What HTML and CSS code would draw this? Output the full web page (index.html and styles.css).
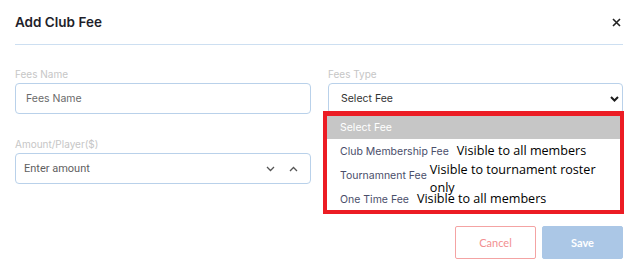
FILE: index.html
```html
<!DOCTYPE html>
<html lang="en">
<head>
  <meta charset="UTF-8" />
  <meta name="viewport" content="width=device-width, initial-scale=1.0" />
  <title>Add Club Fee</title>
  <link rel="stylesheet" href="styles.css">
</head>
<body>
  <div class="modal">
    <div class="modal-header">
      <h1>Add Club Fee</h1>
      <button class="close" aria-label="Close">
        <svg width="9" height="9" viewBox="0 0 9 9"><path d="M1 1L8 8M8 1L1 8" stroke="#222" stroke-width="1.6" fill="none"/></svg>
      </button>
    </div>

    <div class="form-grid">
      <div class="field">
        <label>Fees Name</label>
        <div class="input"><span class="placeholder">Fees Name</span></div>
      </div>

      <div class="field">
        <label>Fees Type</label>
        <div class="select-wrap">
          <div class="input select">
            <span class="value">Select Fee</span>
            <svg class="chevron" width="9" height="6" viewBox="0 0 9 6"><path d="M1 1L4.5 4.5L8 1" stroke="#1c1c1c" stroke-width="2" fill="none"/></svg>
          </div>
          <div class="dropdown">
            <div class="option-head">Select Fee</div>
            <div class="option">
              <span>Club Membership Fee</span>
              <span class="note">Visible to all members</span>
            </div>
            <div class="option">
              <span>Tournamnent Fee</span>
              <span class="note note-wrap">Visible to tournament roster only</span>
            </div>
            <div class="option">
              <span>One Time Fee</span>
              <span class="note">Visible to all members</span>
            </div>
          </div>
        </div>
      </div>

      <div class="field">
        <label>Amount/Player($)</label>
        <div class="input amount">
          <span class="placeholder alt">Enter amount</span>
          <span class="spin">
            <svg width="9" height="6" viewBox="0 0 9 6"><path d="M1 1L4.5 4.5L8 1" stroke="#555" stroke-width="1.3" fill="none"/></svg>
            <svg width="9" height="6" viewBox="0 0 9 6"><path d="M1 5L4.5 1.5L8 5" stroke="#555" stroke-width="1.3" fill="none"/></svg>
          </span>
        </div>
      </div>
    </div>

    <div class="actions">
      <button class="btn btn-cancel">Cancel</button>
      <button class="btn btn-save">Save</button>
    </div>
  </div>
</body>
</html>
```

FILE: styles.css
```css
body {
  margin: 0;
  font-family: Inter, 'Open Sans', sans-serif;
  background-color: #ffffff;
  color: #333;
}
.modal {
  padding: 0 14px 0 15px;
}
.modal-header {
  display: flex;
  align-items: center;
  justify-content: space-between;
  height: 44px;
  border-bottom: 1px solid #cddff1;
}
.modal-header h1 {
  margin: 0;
  font-size: 13.5px;
  font-weight: 600;
  color: #1f1f2b;
}
.close {
  border: none;
  background: none;
  padding: 0;
  margin-right: 2px;
  display: flex;
}
.form-grid {
  display: grid;
  grid-template-columns: 296px 295px;
  column-gap: 17px;
  row-gap: 24px;
  margin-top: 23px;
}
label {
  display: block;
  font-size: 10px;
  line-height: 12px;
  color: #c6c6c6;
  margin-bottom: 3px;
}
.input {
  height: 31px;
  box-sizing: border-box;
  border: 1px solid #b9d1ea;
  border-radius: 4px;
  display: flex;
  align-items: center;
  padding: 0 12px 0 10px;
  font-size: 10.5px;
}
.placeholder {
  color: #6a6a6a;
}
.placeholder.alt {
  font-family: Roboto, sans-serif;
  font-size: 11px;
  color: #5f5f5f;
}
.amount {
  justify-content: space-between;
  padding-left: 8px;
}
.spin {
  display: flex;
  gap: 14px;
}
.select-wrap {
  position: relative;
}
.select {
  justify-content: space-between;
  padding: 0 3px 0 12px;
  color: #333;
}
.dropdown {
  position: absolute;
  top: 28px;
  left: -5px;
  width: 301px;
  height: 103px;
  box-sizing: border-box;
  border: 4px solid #ec1c24;
  border-top-width: 5px;
  background: #fff;
  font-size: 10.5px;
  color: #4a4e6a;
}
.option-head {
  height: 23px;
  background: #c6c6c6;
  color: #fff;
  display: flex;
  align-items: center;
  padding-left: 13px;
}
.option {
  height: 24px;
  display: flex;
  align-items: center;
  padding-left: 13px;
}
.option:first-of-type {
  margin-top: 1px;
}
.note {
  font-family: 'Open Sans', sans-serif;
  font-size: 12.6px;
  line-height: 18px;
  color: #000;
  margin-left: 8px;
}
.note-wrap {
  width: 175px;
  align-self: flex-start;
  margin-top: -2px;
  margin-left: 3px;
}
.actions {
  display: flex;
  justify-content: flex-end;
  gap: 6px;
  margin-top: 42px;
}
.btn {
  width: 81px;
  height: 33px;
  border-radius: 2px;
  font-family: Lato, sans-serif;
  font-size: 11px;
  cursor: pointer;
}
.btn-cancel {
  background: #fff;
  border: 1px solid #f4a3a3;
  color: #f28f8f;
}
.btn-save {
  background: #abc7e6;
  border: 1px solid #abc7e6;
  color: #fff;
  font-weight: bold;
}
```
